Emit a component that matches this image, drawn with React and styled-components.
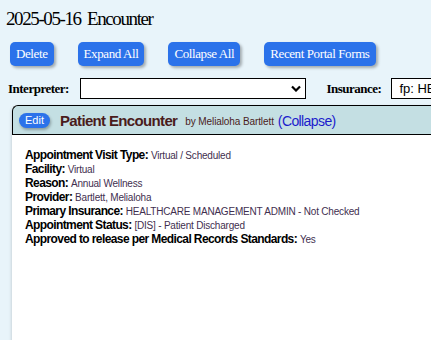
import React from 'react';
import styled, { createGlobalStyle } from 'styled-components';

const Global = createGlobalStyle`
    html, body {
        margin: 0;
        padding: 0;
        background: #e8f4fa;
        overflow: hidden;
    }
`;

const Page = styled.div`
    width: 460px;
    height: 340px;
    padding: 8px 0 0 6px;
    box-sizing: border-box;
    font-family: "Liberation Serif", "Times New Roman", serif;
`;

const Title = styled.h1`
    margin: 0;
    font-size: 19px;
    font-weight: normal;
    letter-spacing: -1.4px;
    word-spacing: 3px;
    line-height: 22px;
    color: #000;
`;

const Toolbar = styled.div`
    display: flex;
    gap: 24px;
    margin: 12px 0 0 4px;
`;

const Button = styled.button`
    height: 24px;
    padding: 0 6px;
    border: none;
    border-radius: 5px;
    background: #2b72ea;
    color: #fff;
    font-family: "Liberation Serif", "Times New Roman", serif;
    font-size: 13px;
    letter-spacing: -0.4px;
    box-shadow: 2px 2px 3px rgba(0, 0, 0, 0.3);
`;

const FieldRow = styled.div`
    display: flex;
    align-items: center;
    margin: 12px 0 0 2px;
    height: 21px;
`;

const Label = styled.label`
    font-weight: bold;
    font-size: 13px;
    letter-spacing: -0.5px;
    margin-right: ${({ gap }) => gap}px;
    margin-left: ${({ lead }) => lead || 0}px;
`;

const Select = styled.div`
    width: 222px;
    height: 19px;
    border: 1px solid #000;
    background: #fff;
    display: flex;
    align-items: center;
    justify-content: flex-end;
    padding-right: 4px;
    box-sizing: content-box;
`;

const Input = styled.div`
    width: 60px;
    height: 19px;
    border: 1px solid #000;
    background: #fff;
    font-family: "Liberation Sans", Arial, sans-serif;
    font-size: 13px;
    line-height: 19px;
    padding-left: 7px;
    white-space: nowrap;
    overflow: hidden;
`;

const Card = styled.div`
    margin: 6px 0 0 6px;
    width: 440px;
    height: 240px;
    background: #fff;
    border-radius: 6px 0 0 0;
    box-shadow: -1px 1px 3px rgba(0, 0, 0, 0.12);
`;

const CardHeader = styled.div`
    display: flex;
    align-items: center;
    height: 28px;
    border: 1px solid #000;
    border-right: none;
    border-radius: 6px 0 0 0;
    background: #c4dfe3;
    padding-left: 6px;
    font-family: "Liberation Sans", Arial, sans-serif;
`;

const EditButton = styled.span`
    width: 31px;
    height: 15px;
    border-radius: 8px;
    background: #2b72ea;
    color: #fff;
    font-size: 11px;
    line-height: 15px;
    text-align: center;
    box-shadow: 1px 2px 3px rgba(0, 0, 0, 0.3);
    margin-right: 10px;
`;

const HeaderTitle = styled.span`
    font-size: 15px;
    font-weight: bold;
    letter-spacing: -0.65px;
    color: #4a1c1c;
    margin-right: 8px;
`;

const By = styled.span`
    font-size: 10px;
    letter-spacing: -0.1px;
    color: #4a1c1c;
    margin-right: 4px;
    margin-top: 3px;
`;

const CollapseLink = styled.span`
    font-size: 14px;
    letter-spacing: -0.6px;
    color: #1c1ccc;
    margin-top: 1px;
`;

const CardBody = styled.div`
    padding: 13px 0 0 13px;
    font-family: "Liberation Sans", Arial, sans-serif;
`;

const Line = styled.div`
    font-size: 10px;
    line-height: 14px;
    height: 14px;
    white-space: nowrap;
`;

const Key = styled.span`
    font-size: 12px;
    font-weight: bold;
    letter-spacing: -0.6px;
    color: #000;
`;

const Value = styled.span`
    font-size: 10px;
    letter-spacing: -0.2px;
    color: #3f2f4f;
`;

const Chevron = () => (
    <svg width="10" height="7" viewBox="0 0 10 7">
        <path d="M1 1.5 L5 5.5 L9 1.5" fill="none" stroke="#000" strokeWidth="2.2" />
    </svg>
);

const details = [
    ['Appointment Visit Type:', 'Virtual / Scheduled'],
    ['Facility:', 'Virtual'],
    ['Reason:', 'Annual Wellness'],
    ['Provider:', 'Bartlett, Melialoha'],
    ['Primary Insurance:', 'HEALTHCARE MANAGEMENT ADMIN - Not Checked'],
    ['Appointment Status:', '[DIS] - Patient Discharged'],
    ['Approved to release per Medical Records Standards:', 'Yes'],
];

const App = () => {
    return (
        <>
            <Global />
            <Page>
                <Title>2025-05-16 Encounter</Title>
                <Toolbar>
                    <Button>Delete</Button>
                    <Button>Expand All</Button>
                    <Button>Collapse All</Button>
                    <Button>Recent Portal Forms</Button>
                </Toolbar>
                <FieldRow>
                    <Label gap={11}>Interpreter:</Label>
                    <Select><Chevron /></Select>
                    <Label lead={20} gap={10}>Insurance:</Label>
                    <Input>fp: HEALTHCARE</Input>
                </FieldRow>
                <Card>
                    <CardHeader>
                        <EditButton>Edit</EditButton>
                        <HeaderTitle>Patient Encounter</HeaderTitle>
                        <By>by Melialoha Bartlett</By>
                        <CollapseLink>(Collapse)</CollapseLink>
                    </CardHeader>
                    <CardBody>
                        {details.map(([k, v]) => (
                            <Line key={k}>
                                <Key>{k}</Key> <Value>{v}</Value>
                            </Line>
                        ))}
                    </CardBody>
                </Card>
            </Page>
        </>
    );
};

export default App;
